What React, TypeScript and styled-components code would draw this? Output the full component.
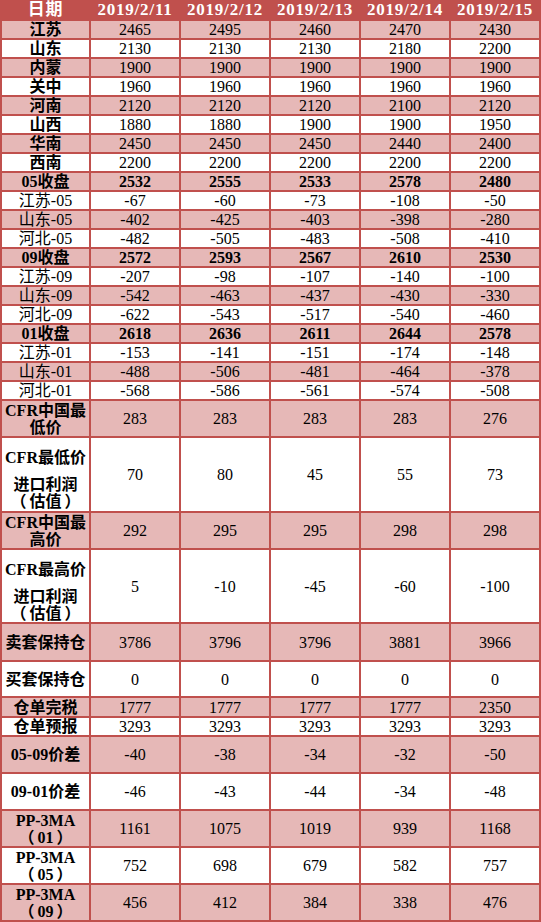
import React from "react";
import styled, { createGlobalStyle } from "styled-components";

const Global = createGlobalStyle`
  html, body { margin: 0; padding: 0; background: #ffffff; }
  #root { width: 541px; }
`;

const RED = "#c0504d";
const PINK = "#e6b8b7";

const Sheet = styled.div`
  width: 541px;
  box-sizing: border-box;
  display: flex;
  flex-direction: column;
  gap: 2px;
  padding: 0 2px 2px 2px;
  background: ${RED};
`;

const Row = styled.div<{ $h: number }>`
  display: grid;
  grid-template-columns: 87px repeat(5, 88px);
  column-gap: 2px;
  height: ${(p) => p.$h}px;
`;

const HeadCell = styled.div`
  background: ${RED};
  color: #ffffff;
  display: flex;
  align-items: center;
  justify-content: center;
  font-family: "Liberation Serif", "Noto Sans CJK SC", serif;
  font-weight: 700;
  font-size: 17px;
  letter-spacing: 0.8px;
  line-height: 19px;
  overflow: hidden;
  white-space: nowrap;
`;

const Cell = styled.div<{ $pink: boolean; $bold?: boolean; $top?: boolean }>`
  background: ${(p) => (p.$pink ? PINK : "#ffffff")};
  color: #000000;
  display: flex;
  flex-direction: column;
  align-items: center;
  justify-content: ${(p) => (p.$top ? "flex-start" : "center")};
  padding-top: ${(p) => (p.$top ? "11px" : "0")};
  box-sizing: border-box;
  font-family: "Liberation Serif", "Noto Sans CJK SC", serif;
  font-size: 16px;
  font-weight: ${(p) => (p.$bold ? 700 : 400)};
  line-height: 17px;
  text-align: center;
  white-space: nowrap;
  overflow: hidden;
`;

const Line = styled.span<{ $gap?: boolean }>`
  display: block;
  margin-top: ${(p) => (p.$gap ? "10px" : "0")};
`;

const Paren = styled.span<{ $side: "open" | "close" }>`
  display: inline-block;
  margin-left: ${(p) => (p.$side === "open" ? "-3px" : "3px")};
  margin-right: ${(p) => (p.$side === "open" ? "3px" : "-3px")};
`;

function renderLabel(text: string) {
  const m = text.match(/^（(.*)）$/);
  if (!m) return text;
  return (
    <>
      <Paren $side="open">（</Paren>
      {m[1]}
      <Paren $side="close">）</Paren>
    </>
  );
}

type RowDef = {
  label: string[];
  values: (string | number)[];
  h: number;
  labelBold?: boolean;
  valueBold?: boolean;
  tall?: boolean;
};

const dates = ["2019/2/11", "2019/2/12", "2019/2/13", "2019/2/14", "2019/2/15"];

const rows: RowDef[] = [
  { label: ["江苏"], values: [2465, 2495, 2460, 2470, 2430], h: 17, labelBold: true },
  { label: ["山东"], values: [2130, 2130, 2130, 2180, 2200], h: 17, labelBold: true },
  { label: ["内蒙"], values: [1900, 1900, 1900, 1900, 1900], h: 17, labelBold: true },
  { label: ["关中"], values: [1960, 1960, 1960, 1960, 1960], h: 17, labelBold: true },
  { label: ["河南"], values: [2120, 2120, 2120, 2100, 2120], h: 17, labelBold: true },
  { label: ["山西"], values: [1880, 1880, 1900, 1900, 1950], h: 17, labelBold: true },
  { label: ["华南"], values: [2450, 2450, 2450, 2440, 2400], h: 17, labelBold: true },
  { label: ["西南"], values: [2200, 2200, 2200, 2200, 2200], h: 17, labelBold: true },
  { label: ["05收盘"], values: [2532, 2555, 2533, 2578, 2480], h: 17, labelBold: true, valueBold: true },
  { label: ["江苏-05"], values: [-67, -60, -73, -108, -50], h: 17 },
  { label: ["山东-05"], values: [-402, -425, -403, -398, -280], h: 17 },
  { label: ["河北-05"], values: [-482, -505, -483, -508, -410], h: 17 },
  { label: ["09收盘"], values: [2572, 2593, 2567, 2610, 2530], h: 17, labelBold: true, valueBold: true },
  { label: ["江苏-09"], values: [-207, -98, -107, -140, -100], h: 17 },
  { label: ["山东-09"], values: [-542, -463, -437, -430, -330], h: 17 },
  { label: ["河北-09"], values: [-622, -543, -517, -540, -460], h: 17 },
  { label: ["01收盘"], values: [2618, 2636, 2611, 2644, 2578], h: 17, labelBold: true, valueBold: true },
  { label: ["江苏-01"], values: [-153, -141, -151, -174, -148], h: 17 },
  { label: ["山东-01"], values: [-488, -506, -481, -464, -378], h: 17 },
  { label: ["河北-01"], values: [-568, -586, -561, -574, -508], h: 17 },
  { label: ["CFR中国最", "低价"], values: [283, 283, 283, 283, 276], h: 35, labelBold: true },
  { label: ["CFR最低价", "进口利润", "（估值）"], values: [70, 80, 45, 55, 73], h: 73, labelBold: true, tall: true },
  { label: ["CFR中国最", "高价"], values: [292, 295, 295, 298, 298], h: 35, labelBold: true },
  { label: ["CFR最高价", "进口利润", "（估值）"], values: [5, -10, -45, -60, -100], h: 72, labelBold: true, tall: true },
  { label: ["卖套保持仓"], values: [3786, 3796, 3796, 3881, 3966], h: 36, labelBold: true },
  { label: ["买套保持仓"], values: [0, 0, 0, 0, 0], h: 34, labelBold: true },
  { label: ["仓单完税"], values: [1777, 1777, 1777, 1777, 2350], h: 18, labelBold: true },
  { label: ["仓单预报"], values: [3293, 3293, 3293, 3293, 3293], h: 17, labelBold: true },
  { label: ["05-09价差"], values: [-40, -38, -34, -32, -50], h: 35, labelBold: true },
  { label: ["09-01价差"], values: [-46, -43, -44, -34, -48], h: 35, labelBold: true },
  { label: ["PP-3MA", "（01）"], values: [1161, 1075, 1019, 939, 1168], h: 35, labelBold: true },
  { label: ["PP-3MA", "（05）"], values: [752, 698, 679, 582, 757], h: 35, labelBold: true },
  { label: ["PP-3MA", "（09）"], values: [456, 412, 384, 338, 476], h: 35, labelBold: true },
];

export default function App() {
  return (
    <>
      <Global />
      <Sheet>
        <Row $h={19}>
          <HeadCell>日期</HeadCell>
          {dates.map((d) => (
            <HeadCell key={d}>{d}</HeadCell>
          ))}
        </Row>
        {rows.map((r, i) => {
          const pink = i % 2 === 0;
          return (
            <Row $h={r.h} key={i}>
              <Cell $pink={pink} $bold={r.labelBold} $top={r.tall}>
                {r.label.map((l, j) => (
                  <Line key={j} $gap={r.tall && j === 1}>
                    {renderLabel(l)}
                  </Line>
                ))}
              </Cell>
              {r.values.map((v, j) => (
                <Cell $pink={pink} $bold={r.valueBold} key={j}>
                  {v}
                </Cell>
              ))}
            </Row>
          );
        })}
      </Sheet>
    </>
  );
}
